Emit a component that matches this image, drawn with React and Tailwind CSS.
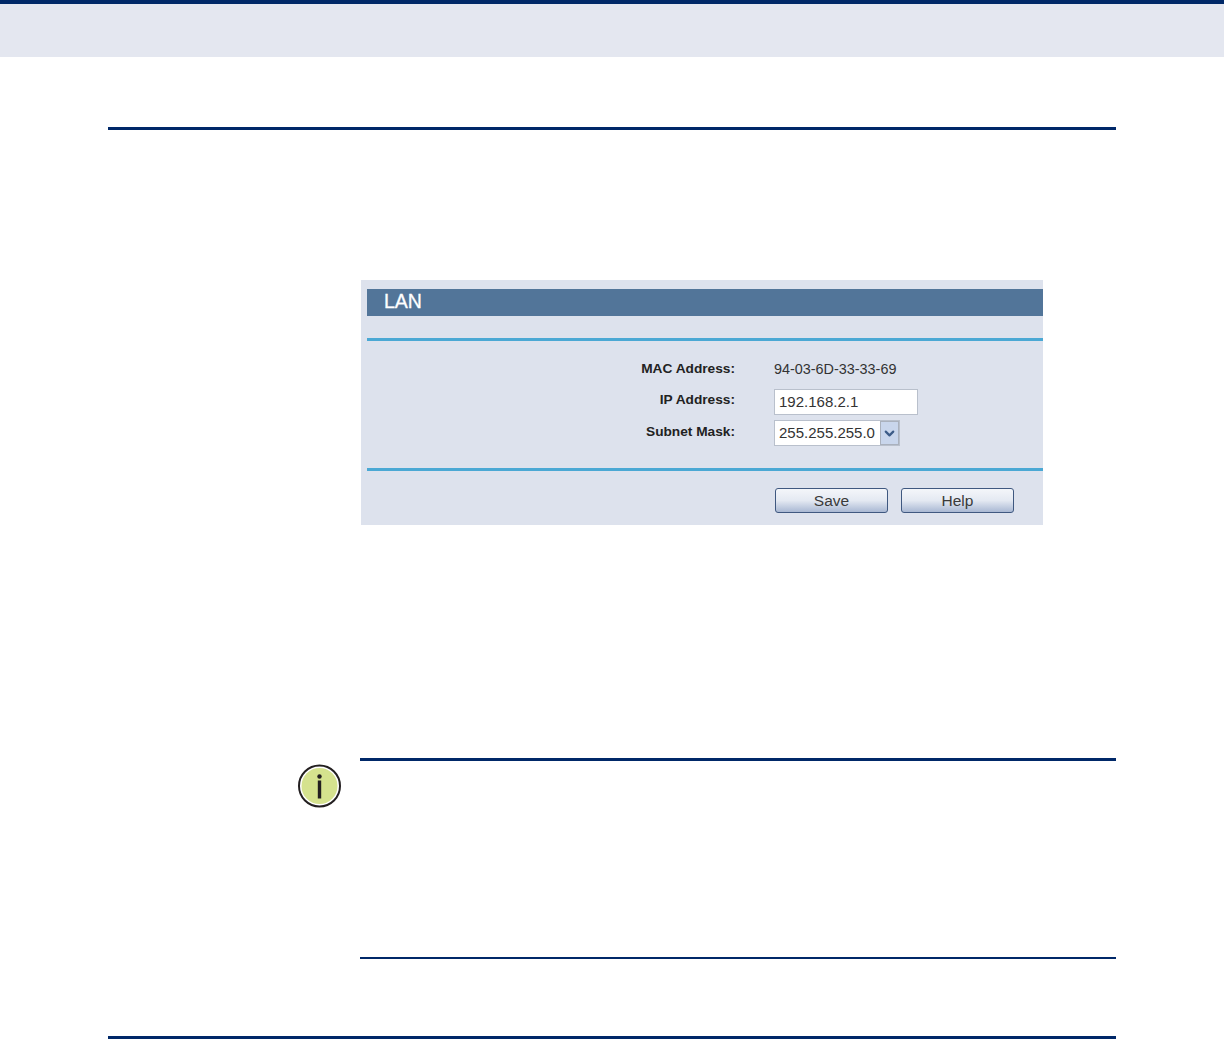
import { ChevronDown } from "lucide-react";

const font = "font-['Liberation_Sans',Arial,sans-serif]";

function NoteIcon() {
  return (
    <svg width="44" height="44" viewBox="0 0 44 44" className="block">
      <circle cx="22.5" cy="22" r="20.5" fill="#fff" stroke="#231f20" strokeWidth="2" />
      <circle cx="22.5" cy="22" r="18" fill="#d5e28e" />
      <circle cx="22.5" cy="12.5" r="2.2" fill="#231f20" />
      <rect x="20.8" y="16.5" width="3.4" height="18" fill="#231f20" />
    </svg>
  );
}

function FieldRow({ label, className, labelClass, children }) {
  return (
    <div className={`flex items-center ${className}`}>
      <div className={`w-[368px] text-right text-[13.7px] font-bold text-[#222] ${labelClass}`}>{label}</div>
      <div className="ml-[39px]">{children}</div>
    </div>
  );
}

function FormButton({ children }) {
  return (
    <button
      type="button"
      className="h-[25px] w-[113px] rounded-[3px] border border-[#3f5880] bg-gradient-to-b from-[#f4f6fa] via-[#e4e9f2] to-[#a9b8d3] text-[15.5px] leading-none text-[#3a3a3a]"
    >
      {children}
    </button>
  );
}

export default function App() {
  return (
    <div className={`h-[1040px] w-[1224px] overflow-hidden bg-white ${font}`}>
      <div className="h-[57px] border-t-[4px] border-[#002868] bg-[#e4e7f0]" />

      <div className="ml-[108px] mt-[70px] h-[3px] w-[1008px] bg-[#002868]" />

      <div className="ml-[361px] mt-[150px] h-[245px] w-[682px] bg-[#dde2ed] pl-[6px] pt-[9px]">
        <div className="flex h-[27px] items-center bg-[#527599] pb-[2px] pl-[17px] text-[19.5px] font-medium text-white [-webkit-text-stroke:0.3px_#fff]">
          LAN
        </div>
        <div className="mt-[22px] h-[3px] bg-[#4aa8d4]" />

        <FieldRow label="MAC Address:" className="mt-[18px] h-[20px]">
          <span className="text-[14.4px] text-[#333]">94-03-6D-33-33-69</span>
        </FieldRow>
        <FieldRow label="IP Address:" labelClass="pb-[4px]" className="mt-[10px] h-[26px]">
          <div className="flex h-[26px] w-[144px] items-center border border-[#b9c0cc] bg-white pl-[4px] text-[15px] text-[#333]">
            192.168.2.1
          </div>
        </FieldRow>
        <FieldRow label="Subnet Mask:" labelClass="pb-[2px]" className="mt-[5px] h-[26px]">
          <div className="flex h-[26px] w-[126px] items-center border border-[#b9c0cc] bg-white pl-[4px] text-[15px] text-[#333]">
            <span className="flex-1">255.255.255.0</span>
            <span className="flex h-[24px] w-[19px] items-center justify-center border border-[#aab1bd] bg-[#c9d6ec]">
              <ChevronDown size={15} strokeWidth={3.5} className="text-[#3d5c88]" />
            </span>
          </div>
        </FieldRow>

        <div className="mt-[22px] h-[3px] bg-[#4aa8d4]" />
        <div className="ml-[408px] mt-[17px] flex gap-[13px]">
          <FormButton>Save</FormButton>
          <FormButton>Help</FormButton>
        </div>
      </div>

      <div className="ml-[297px] mt-[233px] flex w-[819px] items-start">
        <div className="mt-[6px] w-[63px]">
          <NoteIcon />
        </div>
        <div className="h-[201px] flex-1 border-t-[3px] border-b-2 border-[#002868]" />
      </div>

      <div className="ml-[108px] mt-[77px] h-[3px] w-[1008px] bg-[#002868]" />
    </div>
  );
}
